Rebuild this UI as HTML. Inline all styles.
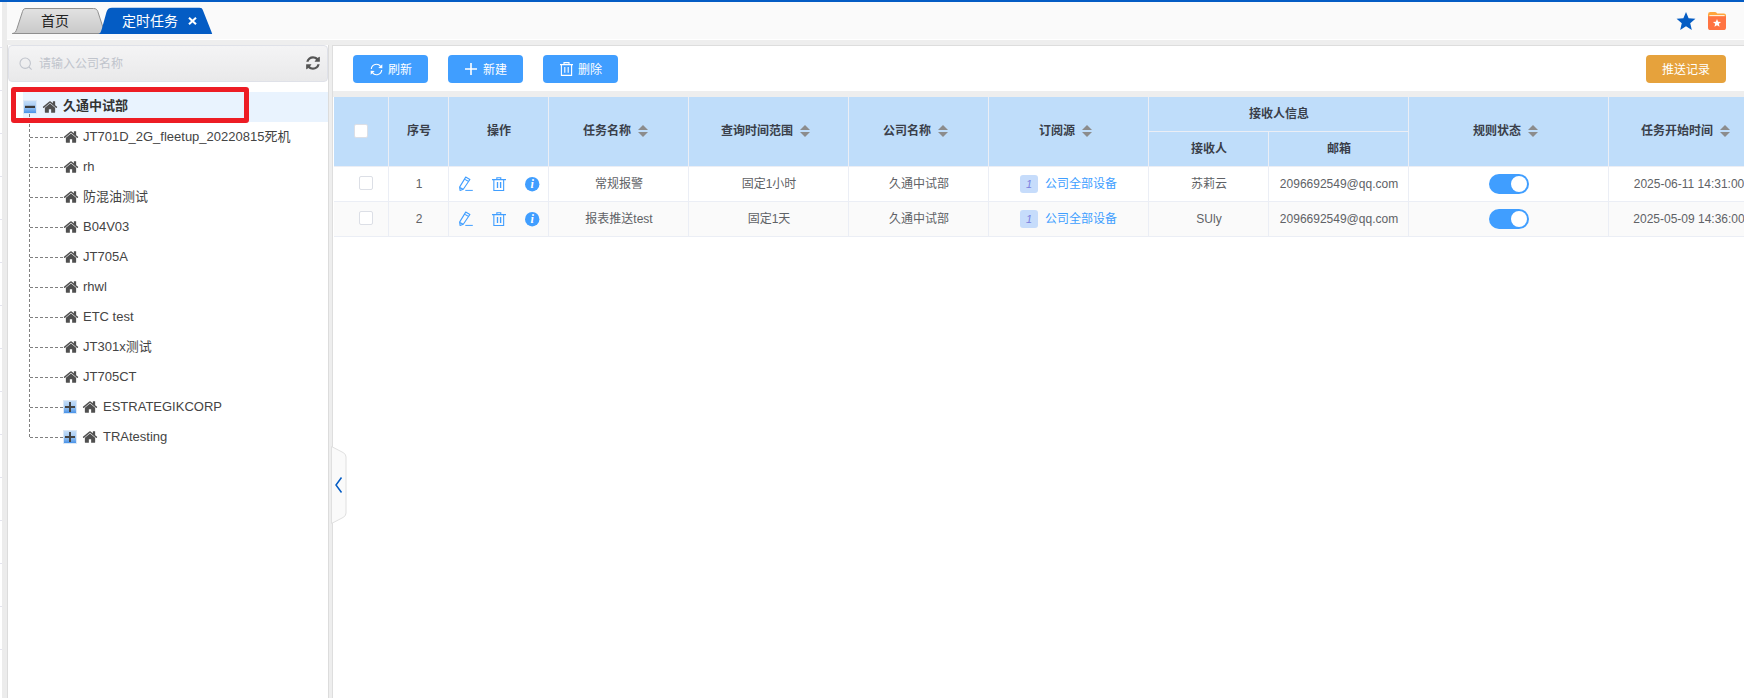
<!DOCTYPE html>
<html lang="zh-CN">
<head>
<meta charset="utf-8">
<title>定时任务</title>
<style>
*{box-sizing:border-box;margin:0;padding:0}
html,body{width:1744px;height:698px;overflow:hidden;background:#fff}
body{font-family:"Liberation Sans","Noto Sans CJK SC",sans-serif;font-size:12px;color:#606266;position:relative}
.abs{position:absolute}
#topbar{left:0;top:0;width:1744px;height:2px;background:#045cc4}
#leftstrip{left:0;top:2px;width:7px;height:696px;background:#fff}
#leftstrip .g{position:absolute;left:2px;top:0;width:5px;height:696px;background:#ececec}
#leftstrip .ln{position:absolute;left:0;width:2px;height:1px;background:#e4e4ee}
#tabbar{left:7px;top:2px;width:1737px;height:38px;background:#fafafa}
#strip1{left:7px;top:40px;width:1737px;height:5px;background:#eee}
#tabs{left:0;top:0}
.tabtxt{position:absolute;font-size:14px;line-height:16px;white-space:nowrap}
/* left panel */
#lpanel{left:7px;top:45px;width:322px;height:653px;background:#fff;border-left:1px solid #dcdcdc;border-right:1px solid #dcdcdc}
#search{left:8px;top:45px;width:320.2px;height:36.8px;border:1px solid #dfe1e8;border-radius:4px;background:linear-gradient(#f4f4f5,#e9e9ea)}
#search .ph{position:absolute;left:30px;top:10.4px;font-size:12px;line-height:16px;color:#c0c4cc}
#gap{left:329px;top:45px;width:3px;height:653px;background:#eee}
/* tree */
#rootbg{left:23px;top:92px;width:305px;height:30px;background:#e9f3fe}
#redbox{left:11px;top:87px;width:238px;height:36px;border:5px solid #ed1c24;border-radius:3px}
.tn{position:absolute;font-size:13px;line-height:18px;color:#444;white-space:nowrap}
.vline{left:29px;top:114px;width:1px;height:324px;background:repeating-linear-gradient(to bottom,#808080 0,#808080 3px,transparent 3px,transparent 5px)}
.hline{position:absolute;left:30px;width:33px;height:1px;background:repeating-linear-gradient(to right,#808080 0,#808080 3px,transparent 3px,transparent 5px)}
/* right panel */
#rpanel{left:332px;top:45px;width:1412px;height:653px;background:#fff;border-left:1px solid #dedede;border-top:1px solid #ddd}
#strip2{left:333px;top:91px;width:1411px;height:6px;background:#eee}
.btn{position:absolute;top:55px;height:28px;border-radius:4px;background:#409eff;color:#fff;font-size:12px;line-height:28px;white-space:nowrap}
.btn span{position:absolute;top:1px}
/* table */
#thead{left:334px;top:97px;width:1410px;height:70px;background:#bfddfa}
.th{position:absolute;font-weight:bold;color:#3a3f4a;font-size:12px;line-height:16px;white-space:nowrap;transform:translateX(-50%)}
.vl{position:absolute;width:1px;background:#ebeef5}
.hl{position:absolute;height:1px;background:#ebeef5}
.td{position:absolute;font-size:12px;line-height:16px;color:#606266;white-space:nowrap;transform:translateX(-50%)}
.sort{position:absolute;width:10px;height:12px}
.sort:before{content:"";position:absolute;left:0;top:0;border:5px solid transparent;border-top-width:0;border-bottom:5px solid #8c8c8c}
.sort:after{content:"";position:absolute;left:0;top:7px;border:5px solid transparent;border-bottom-width:0;border-top:5px solid #8c8c8c}
.cb{position:absolute;width:14px;height:14px;border:1px solid #dcdfe6;border-radius:2px;background:#fff}
.sw{position:absolute;width:40px;height:20px;border-radius:10px;background:#409eff}
.sw i{position:absolute;right:2px;top:2px;width:16px;height:16px;border-radius:8px;background:#fff}
.tag{position:absolute;width:18px;height:18px;border-radius:3px;background:#c6dcfb;color:#7b7fe0;font-size:11px;line-height:18px;text-align:center;font-style:italic}
.lnk{position:absolute;color:#409eff;font-size:12px;line-height:16px;white-space:nowrap}
svg{position:absolute;overflow:visible}
</style>
</head>
<body>
<div class="abs" id="topbar"></div>
<div class="abs" id="leftstrip"><div class="g"></div>
<div class="ln" style="top:45px"></div><div class="ln" style="top:88px"></div><div class="ln" style="top:131px"></div><div class="ln" style="top:174px"></div><div class="ln" style="top:217px"></div><div class="ln" style="top:260px"></div><div class="ln" style="top:303px"></div><div class="ln" style="top:346px"></div><div class="ln" style="top:389px"></div><div class="ln" style="top:432px"></div><div class="ln" style="top:475px"></div><div class="ln" style="top:518px"></div><div class="ln" style="top:561px"></div><div class="ln" style="top:604px"></div><div class="ln" style="top:647px"></div>
</div>
<div class="abs" id="tabbar"></div>
<div class="abs" id="strip1"></div>
<div class="abs" style="left:7px;top:39px;width:1737px;height:1px;background:#fff"></div>

<!-- tabs -->
<svg class="abs" id="tabs" width="230" height="40" viewBox="0 0 230 40">
  <defs><linearGradient id="tg" x1="0" y1="0" x2="0" y2="1"><stop offset="0" stop-color="#e2e2e2"/><stop offset="1" stop-color="#c9c9c9"/></linearGradient></defs>
  <path d="M12.25 33.5 C15.5 33.5 16 31 17 28.5 L22.5 11.5 C23.3 9.3 24 8.5 26 8.5 L93.5 8.5 C96 8.5 97 9.5 97.8 11.5 L103.5 29 C104.5 32 105 33.5 107 33.5 Z" fill="url(#tg)" stroke="#8f8f8f" stroke-width="1"/>
  <path d="M97.5 34 C100.2 34 100.8 32 101.8 29 L106.5 12 C107.4 9.3 108.8 7.8 112 7.8 L199.5 7.8 C201.5 7.8 202.3 8.5 203 10.5 L211.5 32 L212.2 34 Z" fill="#045cc4"/>
</svg>
<div class="tabtxt" style="left:41px;top:13px;color:#222">首页</div>
<div class="tabtxt" style="left:122px;top:13px;color:#fff">定时任务</div>
<svg style="left:187.8px;top:17px" width="9" height="8" viewBox="0 0 9 8"><path d="M1 0.8 L8 7.2 M8 0.8 L1 7.2" stroke="#fff" stroke-width="2.1" fill="none"/></svg>

<!-- top right icons -->
<svg style="left:1677px;top:12px" width="18" height="18" viewBox="0 0 18 18"><path d="M9.00 0.00 L11.62 6.30 L18.42 6.84 L13.23 11.28 L14.82 17.91 L9.00 14.35 L3.18 17.91 L4.77 11.28 L-0.42 6.84 L6.38 6.30 Z" fill="#055dc4"/></svg>
<svg style="left:1708px;top:12px" width="18" height="18" viewBox="0 0 18 18"><path d="M2.4 0 H7 Q8 0 8.6 0.8 L9.2 1.5 H16 Q18 1.5 18 3.5 V8 H0 V2.4 Q0 0 2.4 0 Z" fill="#ffa53c"/><rect x="1.4" y="3.2" width="15.2" height="1.2" fill="#fff"/><path d="M0 4.2 H18 V15.4 Q18 18 15.4 18 H2.6 Q0 18 0 15.4 Z" fill="#ff7442"/><path d="M9 6.9 L10.15 9.7 L13.1 9.9 L10.85 11.85 L11.55 14.8 L9 13.2 L6.45 14.8 L7.15 11.85 L4.9 9.9 L7.85 9.7 Z" fill="#fff"/></svg>

<!-- left panel -->
<div class="abs" id="lpanel"></div>
<div class="abs" id="gap"></div>
<div class="abs" id="search"><div class="ph">请输入公司名称</div>
<svg style="left:9.5px;top:11px" width="14" height="14" viewBox="0 0 14 14"><circle cx="6.2" cy="6.2" r="5.2" fill="none" stroke="#c0c4cc" stroke-width="1.1"/><path d="M10 10 L12.6 12.6" stroke="#c0c4cc" stroke-width="1.1"/></svg>
<svg style="left:295.6px;top:9.4px" width="16" height="16" viewBox="0 0 1792 1792"><path fill="#555" d="M1639 1056q0 5-1 7-64 268-268 434.500t-478 166.500q-146 0-282.500-55t-243.500-157l-129 129q-19 19-45 19t-45-19-19-45v-448q0-26 19-45t45-19h448q26 0 45 19t19 45-19 45l-137 137q71 66 161 102t187 36q134 0 250-65t186-179q11-17 53-117 8-23 30-23h192q13 0 22.500 9.500t9.500 22.500zM1664 256v448q0 26-19 45t-45 19h-448q-26 0-45-19t-19-45 19-45l138-138q-148-137-349-137-134 0-250 65t-186 179q-11 17-53 117-8 23-30 23h-199q-13 0-22.500-9.500t-9.500-22.500v-7q65-268 270-434.500t480-166.500q146 0 284 55.500t245 156.500l130-129q19-19 45-19t45 19 19 45z"/></svg>
</div>

<div class="abs" id="rootbg"></div>
<div class="abs vline"></div>
<div id="tree">
<svg style="left:23px;top:100px" width="14" height="14" viewBox="0 0 14 14"><defs><linearGradient id="pg" x1="0" y1="0" x2="0" y2="1"><stop offset="0" stop-color="#c3dcf7"/><stop offset="0.45" stop-color="#a5cbf4"/><stop offset="1" stop-color="#4a93e8"/></linearGradient></defs><rect x="0.5" y="0.5" width="13" height="13" fill="none" stroke="#dbe8f6" stroke-width="1"/><rect x="1" y="1" width="12" height="12" fill="url(#pg)"/><rect x="2" y="5.8" width="10" height="2.2" fill="#3a3a3a"/></svg>
<svg style="left:42px;top:98.9px" width="16" height="16" viewBox="0 0 1792 1792"><path fill="#505050" d="M1472 992v480q0 26-19 45t-45 19h-384v-384h-256v384h-384q-26 0-45-19t-19-45v-480q0-1 .5-3t.5-3l575-474 575 474q1 2 1 6zM1695 923l-62 74q-8 9-21 11h-3q-13 0-21-7l-692-577-692 577q-12 8-24 7-13-2-21-11l-62-74q-8-10-7-23.500t11-21.500l719-599q32-26 76-26t76 26l244 204v-195q0-14 9-23t23-9h192q14 0 23 9t9 23v408l219 182q10 8 11 21.500t-7 23.500z"/></svg>
<div class="tn" style="left:63px;top:97px;font-weight:bold;color:#333">久通中试部</div>
<div class="hline" style="top:137px"></div>
<svg style="left:62.6px;top:128.9px" width="16" height="16" viewBox="0 0 1792 1792"><path fill="#505050" d="M1472 992v480q0 26-19 45t-45 19h-384v-384h-256v384h-384q-26 0-45-19t-19-45v-480q0-1 .5-3t.5-3l575-474 575 474q1 2 1 6zM1695 923l-62 74q-8 9-21 11h-3q-13 0-21-7l-692-577-692 577q-12 8-24 7-13-2-21-11l-62-74q-8-10-7-23.500t11-21.500l719-599q32-26 76-26t76 26l244 204v-195q0-14 9-23t23-9h192q14 0 23 9t9 23v408l219 182q10 8 11 21.500t-7 23.500z"/></svg>
<div class="tn" style="left:83px;top:127.5px">JT701D_2G_fleetup_20220815死机</div>
<div class="hline" style="top:167px"></div>
<svg style="left:62.6px;top:158.9px" width="16" height="16" viewBox="0 0 1792 1792"><path fill="#505050" d="M1472 992v480q0 26-19 45t-45 19h-384v-384h-256v384h-384q-26 0-45-19t-19-45v-480q0-1 .5-3t.5-3l575-474 575 474q1 2 1 6zM1695 923l-62 74q-8 9-21 11h-3q-13 0-21-7l-692-577-692 577q-12 8-24 7-13-2-21-11l-62-74q-8-10-7-23.500t11-21.500l719-599q32-26 76-26t76 26l244 204v-195q0-14 9-23t23-9h192q14 0 23 9t9 23v408l219 182q10 8 11 21.500t-7 23.500z"/></svg>
<div class="tn" style="left:83px;top:157.5px">rh</div>
<div class="hline" style="top:197px"></div>
<svg style="left:62.6px;top:188.9px" width="16" height="16" viewBox="0 0 1792 1792"><path fill="#505050" d="M1472 992v480q0 26-19 45t-45 19h-384v-384h-256v384h-384q-26 0-45-19t-19-45v-480q0-1 .5-3t.5-3l575-474 575 474q1 2 1 6zM1695 923l-62 74q-8 9-21 11h-3q-13 0-21-7l-692-577-692 577q-12 8-24 7-13-2-21-11l-62-74q-8-10-7-23.500t11-21.500l719-599q32-26 76-26t76 26l244 204v-195q0-14 9-23t23-9h192q14 0 23 9t9 23v408l219 182q10 8 11 21.500t-7 23.500z"/></svg>
<div class="tn" style="left:83px;top:187.5px">防混油测试</div>
<div class="hline" style="top:227px"></div>
<svg style="left:62.6px;top:218.9px" width="16" height="16" viewBox="0 0 1792 1792"><path fill="#505050" d="M1472 992v480q0 26-19 45t-45 19h-384v-384h-256v384h-384q-26 0-45-19t-19-45v-480q0-1 .5-3t.5-3l575-474 575 474q1 2 1 6zM1695 923l-62 74q-8 9-21 11h-3q-13 0-21-7l-692-577-692 577q-12 8-24 7-13-2-21-11l-62-74q-8-10-7-23.500t11-21.500l719-599q32-26 76-26t76 26l244 204v-195q0-14 9-23t23-9h192q14 0 23 9t9 23v408l219 182q10 8 11 21.500t-7 23.500z"/></svg>
<div class="tn" style="left:83px;top:217.5px">B04V03</div>
<div class="hline" style="top:257px"></div>
<svg style="left:62.6px;top:248.9px" width="16" height="16" viewBox="0 0 1792 1792"><path fill="#505050" d="M1472 992v480q0 26-19 45t-45 19h-384v-384h-256v384h-384q-26 0-45-19t-19-45v-480q0-1 .5-3t.5-3l575-474 575 474q1 2 1 6zM1695 923l-62 74q-8 9-21 11h-3q-13 0-21-7l-692-577-692 577q-12 8-24 7-13-2-21-11l-62-74q-8-10-7-23.500t11-21.500l719-599q32-26 76-26t76 26l244 204v-195q0-14 9-23t23-9h192q14 0 23 9t9 23v408l219 182q10 8 11 21.500t-7 23.500z"/></svg>
<div class="tn" style="left:83px;top:247.5px">JT705A</div>
<div class="hline" style="top:287px"></div>
<svg style="left:62.6px;top:278.9px" width="16" height="16" viewBox="0 0 1792 1792"><path fill="#505050" d="M1472 992v480q0 26-19 45t-45 19h-384v-384h-256v384h-384q-26 0-45-19t-19-45v-480q0-1 .5-3t.5-3l575-474 575 474q1 2 1 6zM1695 923l-62 74q-8 9-21 11h-3q-13 0-21-7l-692-577-692 577q-12 8-24 7-13-2-21-11l-62-74q-8-10-7-23.500t11-21.500l719-599q32-26 76-26t76 26l244 204v-195q0-14 9-23t23-9h192q14 0 23 9t9 23v408l219 182q10 8 11 21.500t-7 23.500z"/></svg>
<div class="tn" style="left:83px;top:277.5px">rhwl</div>
<div class="hline" style="top:317px"></div>
<svg style="left:62.6px;top:308.9px" width="16" height="16" viewBox="0 0 1792 1792"><path fill="#505050" d="M1472 992v480q0 26-19 45t-45 19h-384v-384h-256v384h-384q-26 0-45-19t-19-45v-480q0-1 .5-3t.5-3l575-474 575 474q1 2 1 6zM1695 923l-62 74q-8 9-21 11h-3q-13 0-21-7l-692-577-692 577q-12 8-24 7-13-2-21-11l-62-74q-8-10-7-23.500t11-21.500l719-599q32-26 76-26t76 26l244 204v-195q0-14 9-23t23-9h192q14 0 23 9t9 23v408l219 182q10 8 11 21.500t-7 23.500z"/></svg>
<div class="tn" style="left:83px;top:307.5px">ETC test</div>
<div class="hline" style="top:347px"></div>
<svg style="left:62.6px;top:338.9px" width="16" height="16" viewBox="0 0 1792 1792"><path fill="#505050" d="M1472 992v480q0 26-19 45t-45 19h-384v-384h-256v384h-384q-26 0-45-19t-19-45v-480q0-1 .5-3t.5-3l575-474 575 474q1 2 1 6zM1695 923l-62 74q-8 9-21 11h-3q-13 0-21-7l-692-577-692 577q-12 8-24 7-13-2-21-11l-62-74q-8-10-7-23.500t11-21.500l719-599q32-26 76-26t76 26l244 204v-195q0-14 9-23t23-9h192q14 0 23 9t9 23v408l219 182q10 8 11 21.500t-7 23.500z"/></svg>
<div class="tn" style="left:83px;top:337.5px">JT301x测试</div>
<div class="hline" style="top:377px"></div>
<svg style="left:62.6px;top:368.9px" width="16" height="16" viewBox="0 0 1792 1792"><path fill="#505050" d="M1472 992v480q0 26-19 45t-45 19h-384v-384h-256v384h-384q-26 0-45-19t-19-45v-480q0-1 .5-3t.5-3l575-474 575 474q1 2 1 6zM1695 923l-62 74q-8 9-21 11h-3q-13 0-21-7l-692-577-692 577q-12 8-24 7-13-2-21-11l-62-74q-8-10-7-23.500t11-21.500l719-599q32-26 76-26t76 26l244 204v-195q0-14 9-23t23-9h192q14 0 23 9t9 23v408l219 182q10 8 11 21.500t-7 23.500z"/></svg>
<div class="tn" style="left:83px;top:367.5px">JT705CT</div>
<div class="hline" style="top:407px"></div>
<svg style="left:63px;top:400px" width="14" height="14" viewBox="0 0 14 14"><rect x="0" y="0" width="14" height="14" fill="#fff"/><rect x="0.5" y="0.5" width="13" height="13" fill="none" stroke="#dbe8f6" stroke-width="1"/><rect x="1" y="1" width="12" height="12" fill="url(#pg)"/><rect x="2" y="6" width="10" height="2" fill="#444"/><rect x="6" y="2" width="2" height="10" fill="#444"/></svg>
<svg style="left:82.2px;top:398.9px" width="16" height="16" viewBox="0 0 1792 1792"><path fill="#505050" d="M1472 992v480q0 26-19 45t-45 19h-384v-384h-256v384h-384q-26 0-45-19t-19-45v-480q0-1 .5-3t.5-3l575-474 575 474q1 2 1 6zM1695 923l-62 74q-8 9-21 11h-3q-13 0-21-7l-692-577-692 577q-12 8-24 7-13-2-21-11l-62-74q-8-10-7-23.500t11-21.500l719-599q32-26 76-26t76 26l244 204v-195q0-14 9-23t23-9h192q14 0 23 9t9 23v408l219 182q10 8 11 21.500t-7 23.500z"/></svg>
<div class="tn" style="left:103px;top:397.5px">ESTRATEGIKCORP</div>
<div class="hline" style="top:437px"></div>
<svg style="left:63px;top:430px" width="14" height="14" viewBox="0 0 14 14"><rect x="0" y="0" width="14" height="14" fill="#fff"/><rect x="0.5" y="0.5" width="13" height="13" fill="none" stroke="#dbe8f6" stroke-width="1"/><rect x="1" y="1" width="12" height="12" fill="url(#pg)"/><rect x="2" y="6" width="10" height="2" fill="#444"/><rect x="6" y="2" width="2" height="10" fill="#444"/></svg>
<svg style="left:82.2px;top:428.9px" width="16" height="16" viewBox="0 0 1792 1792"><path fill="#505050" d="M1472 992v480q0 26-19 45t-45 19h-384v-384h-256v384h-384q-26 0-45-19t-19-45v-480q0-1 .5-3t.5-3l575-474 575 474q1 2 1 6zM1695 923l-62 74q-8 9-21 11h-3q-13 0-21-7l-692-577-692 577q-12 8-24 7-13-2-21-11l-62-74q-8-10-7-23.500t11-21.500l719-599q32-26 76-26t76 26l244 204v-195q0-14 9-23t23-9h192q14 0 23 9t9 23v408l219 182q10 8 11 21.500t-7 23.500z"/></svg>
<div class="tn" style="left:103px;top:427.5px">TRAtesting</div>
</div><!--/tree-->
<div class="abs" id="redbox"></div>

<!-- right panel -->
<div class="abs" id="rpanel"></div>
<div class="abs" id="strip2"></div>

<div class="btn" style="left:353px;width:75px"><svg style="left:16.5px;top:7.6px" width="13" height="13" viewBox="0 0 13 13"><path d="M1.3 6 A5.2 5.2 0 0 1 10.6 3.3 M11.7 7 A5.2 5.2 0 0 1 2.4 9.7" fill="none" stroke="#fff" stroke-width="1.15"/><path d="M12.3 1.2 V5.3 L8.3 4.9 Z M0.7 11.8 V7.7 L4.7 8.1 Z" fill="#fff"/></svg><span style="left:35px">刷新</span></div>
<div class="btn" style="left:448px;width:75px"><svg style="left:17px;top:8.3px" width="12" height="12" viewBox="0 0 12 12"><path d="M6 0 V12 M0 6 H12" stroke="#fff" stroke-width="1.6" fill="none"/></svg><span style="left:35px">新建</span></div>
<div class="btn" style="left:543px;width:75px"><svg style="left:17px;top:7px" width="13" height="14" viewBox="0 0 13 14"><path d="M0 2.6 H13 M4 2.6 V0.6 H9 V2.6 M1.4 2.6 V13.4 H11.6 V2.6 M4.8 5 V10.8 M8.2 5 V10.8" stroke="#fff" stroke-width="1.1" fill="none"/></svg><span style="left:35px">删除</span></div>
<div class="btn" style="left:1646px;width:80px;background:#e6a23c"><span style="left:16px">推送记录</span></div>

<!-- table -->
<div class="abs" id="thead"></div>
<div id="tbl">
<div class="vl" style="left:388px;top:97px;height:70px"></div>
<div class="vl" style="left:448px;top:97px;height:70px"></div>
<div class="vl" style="left:548px;top:97px;height:70px"></div>
<div class="vl" style="left:688px;top:97px;height:70px"></div>
<div class="vl" style="left:848px;top:97px;height:70px"></div>
<div class="vl" style="left:988px;top:97px;height:70px"></div>
<div class="vl" style="left:1148px;top:97px;height:70px"></div>
<div class="vl" style="left:1268px;top:132px;height:35px"></div>
<div class="vl" style="left:1408px;top:97px;height:70px"></div>
<div class="vl" style="left:1608px;top:97px;height:70px"></div>
<div class="hl" style="left:1149px;top:131px;width:259px"></div>
<div class="cb" style="left:354px;top:124px;border-color:#dcdfe6"></div>
<div class="th" style="left:419px;top:123px">序号</div>
<div class="th" style="left:499px;top:123px">操作</div>
<div class="th" style="left:607px;top:123px">任务名称</div>
<div class="sort" style="left:638px;top:125px"></div>
<div class="th" style="left:757px;top:123px">查询时间范围</div>
<div class="sort" style="left:800px;top:125px"></div>
<div class="th" style="left:907px;top:123px">公司名称</div>
<div class="sort" style="left:938px;top:125px"></div>
<div class="th" style="left:1057px;top:123px">订阅源</div>
<div class="sort" style="left:1082px;top:125px"></div>
<div class="th" style="left:1279px;top:106px">接收人信息</div>
<div class="th" style="left:1209px;top:141px">接收人</div>
<div class="th" style="left:1339px;top:141px">邮箱</div>
<div class="th" style="left:1497px;top:123px">规则状态</div>
<div class="sort" style="left:1528px;top:125px"></div>
<div class="th" style="left:1677px;top:123px">任务开始时间</div>
<div class="sort" style="left:1720px;top:125px"></div>
<div class="hl" style="left:334px;top:166px;width:1410px"></div>
<div class="hl" style="left:334px;top:201px;width:1410px"></div>
<div class="vl" style="left:388px;top:167px;height:35px"></div>
<div class="vl" style="left:448px;top:167px;height:35px"></div>
<div class="vl" style="left:548px;top:167px;height:35px"></div>
<div class="vl" style="left:688px;top:167px;height:35px"></div>
<div class="vl" style="left:848px;top:167px;height:35px"></div>
<div class="vl" style="left:988px;top:167px;height:35px"></div>
<div class="vl" style="left:1148px;top:167px;height:35px"></div>
<div class="vl" style="left:1268px;top:167px;height:35px"></div>
<div class="vl" style="left:1408px;top:167px;height:35px"></div>
<div class="vl" style="left:1608px;top:167px;height:35px"></div>
<div class="cb" style="left:359px;top:176px"></div>
<div class="td" style="left:419px;top:176px">1</div>
<svg style="left:459px;top:176px" width="15" height="16" viewBox="0 0 15 16"><path d="M6.7 1.1 L10.9 3.5 L4.3 13.2 L1.1 14.5 L0.6 11.1 Z M5.5 3.1 L9.6 5.5 M0.9 11.4 L4.1 13.2" fill="none" stroke="#409eff" stroke-width="1.1" stroke-linejoin="round"/><path d="M6.3 14.4 H13.8" stroke="#409eff" stroke-width="1"/></svg>
<svg style="left:491.8px;top:177px" width="14" height="14" viewBox="0 0 14 14"><path d="M0 2.6 H14 M4.85 2.6 V0.7 H8.75 V2.6 M1.85 2.6 V13.5 H11.65 V2.6" stroke="#409eff" stroke-width="1.1" fill="none"/><path d="M5.5 5 V11 M8.6 5 V11" stroke="#409eff" stroke-width="1.35" fill="none"/></svg>
<svg style="left:524.7px;top:176.9px" width="15" height="15" viewBox="0 0 15 15"><circle cx="7.2" cy="7.2" r="7.2" fill="#409eff"/><text x="7.2" y="11.4" text-anchor="middle" font-family="Liberation Serif,serif" font-size="12" font-weight="bold" font-style="italic" fill="#fff">i</text></svg>
<div class="td" style="left:619px;top:176px">常规报警</div>
<div class="td" style="left:769px;top:176px">固定1小时</div>
<div class="td" style="left:919px;top:176px">久通中试部</div>
<div class="tag" style="left:1020px;top:175px">1</div>
<div class="lnk" style="left:1045px;top:176px">公司全部设备</div>
<div class="td" style="left:1209px;top:176px">苏莉云</div>
<div class="td" style="left:1339px;top:176px">2096692549@qq.com</div>
<div class="sw" style="left:1489px;top:174px"><i></i></div>
<div class="td" style="left:1689px;top:176px">2025-06-11 14:31:00</div>
<div class="abs" style="left:334px;top:202px;width:1410px;height:35px;background:#fafafa"></div>
<div class="hl" style="left:334px;top:236px;width:1410px"></div>
<div class="vl" style="left:388px;top:202px;height:35px"></div>
<div class="vl" style="left:448px;top:202px;height:35px"></div>
<div class="vl" style="left:548px;top:202px;height:35px"></div>
<div class="vl" style="left:688px;top:202px;height:35px"></div>
<div class="vl" style="left:848px;top:202px;height:35px"></div>
<div class="vl" style="left:988px;top:202px;height:35px"></div>
<div class="vl" style="left:1148px;top:202px;height:35px"></div>
<div class="vl" style="left:1268px;top:202px;height:35px"></div>
<div class="vl" style="left:1408px;top:202px;height:35px"></div>
<div class="vl" style="left:1608px;top:202px;height:35px"></div>
<div class="cb" style="left:359px;top:211px"></div>
<div class="td" style="left:419px;top:211px">2</div>
<svg style="left:459px;top:211px" width="15" height="16" viewBox="0 0 15 16"><path d="M6.7 1.1 L10.9 3.5 L4.3 13.2 L1.1 14.5 L0.6 11.1 Z M5.5 3.1 L9.6 5.5 M0.9 11.4 L4.1 13.2" fill="none" stroke="#409eff" stroke-width="1.1" stroke-linejoin="round"/><path d="M6.3 14.4 H13.8" stroke="#409eff" stroke-width="1"/></svg>
<svg style="left:491.8px;top:212px" width="14" height="14" viewBox="0 0 14 14"><path d="M0 2.6 H14 M4.85 2.6 V0.7 H8.75 V2.6 M1.85 2.6 V13.5 H11.65 V2.6" stroke="#409eff" stroke-width="1.1" fill="none"/><path d="M5.5 5 V11 M8.6 5 V11" stroke="#409eff" stroke-width="1.35" fill="none"/></svg>
<svg style="left:524.7px;top:211.9px" width="15" height="15" viewBox="0 0 15 15"><circle cx="7.2" cy="7.2" r="7.2" fill="#409eff"/><text x="7.2" y="11.4" text-anchor="middle" font-family="Liberation Serif,serif" font-size="12" font-weight="bold" font-style="italic" fill="#fff">i</text></svg>
<div class="td" style="left:619px;top:211px">报表推送test</div>
<div class="td" style="left:769px;top:211px">固定1天</div>
<div class="td" style="left:919px;top:211px">久通中试部</div>
<div class="tag" style="left:1020px;top:210px">1</div>
<div class="lnk" style="left:1045px;top:211px">公司全部设备</div>
<div class="td" style="left:1209px;top:211px">SUly</div>
<div class="td" style="left:1339px;top:211px">2096692549@qq.com</div>
<div class="sw" style="left:1489px;top:209px"><i></i></div>
<div class="td" style="left:1689px;top:211px">2025-05-09 14:36:00</div>
</div><!--/tbl-->

<!-- collapse handle -->
<svg style="left:331px;top:446px" width="16" height="78" viewBox="0 0 16 78"><path d="M0.5 0.5 L12 6.5 Q15 8 15 11 V67 Q15 70 12 71.5 L0.5 77.5 Z" fill="#fafafa" stroke="#e0e0e0" stroke-width="1"/><path d="M10.5 31.5 L5 39 L10.5 46.5" fill="none" stroke="#045cc4" stroke-width="1.5"/></svg>

</body>
</html>
